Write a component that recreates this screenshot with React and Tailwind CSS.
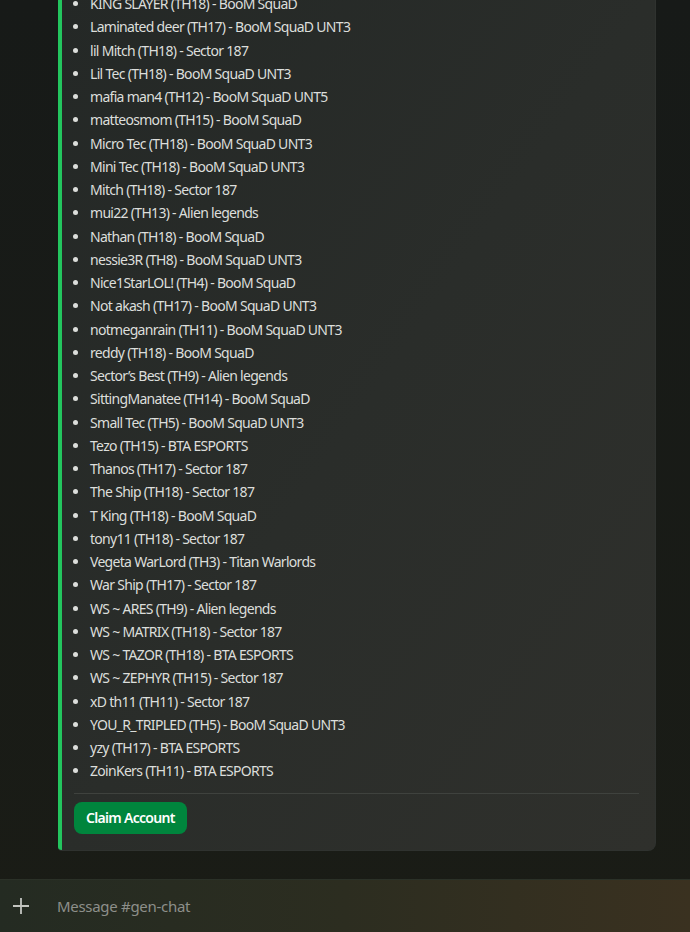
import React from 'react';

const members = [
  'KING SLAYER (TH18) - BooM SquaD',
  'Laminated deer (TH17) - BooM SquaD UNT3',
  'lil Mitch (TH18) - Sector 187',
  'Lil Tec (TH18) - BooM SquaD UNT3',
  'mafia man4 (TH12) - BooM SquaD UNT5',
  'matteosmom (TH15) - BooM SquaD',
  'Micro Tec (TH18) - BooM SquaD UNT3',
  'Mini Tec (TH18) - BooM SquaD UNT3',
  'Mitch (TH18) - Sector 187',
  'mui22 (TH13) - Alien legends',
  'Nathan (TH18) - BooM SquaD',
  'nessie3R (TH8) - BooM SquaD UNT3',
  'Nice1StarLOL! (TH4) - BooM SquaD',
  'Not akash (TH17) - BooM SquaD UNT3',
  'notmeganrain (TH11) - BooM SquaD UNT3',
  'reddy (TH18) - BooM SquaD',
  'Sector\u2019s Best (TH9) - Alien legends',
  'SittingManatee (TH14) - BooM SquaD',
  'Small Tec (TH5) - BooM SquaD UNT3',
  'Tezo (TH15) - BTA ESPORTS',
  'Thanos (TH17) - Sector 187',
  'The Ship (TH18) - Sector 187',
  'T King (TH18) - BooM SquaD',
  'tony11 (TH18) - Sector 187',
  'Vegeta WarLord (TH3) - Titan Warlords',
  'War Ship (TH17) - Sector 187',
  'WS ~ ARES (TH9) - Alien legends',
  'WS ~ MATRIX (TH18) - Sector 187',
  'WS ~ TAZOR (TH18) - BTA ESPORTS',
  'WS ~ ZEPHYR (TH15) - Sector 187',
  'xD th11 (TH11) - Sector 187',
  'YOU_R_TRIPLED (TH5) - BooM SquaD UNT3',
  'yzy (TH17) - BTA ESPORTS',
  'ZoinKers (TH11) - BTA ESPORTS',
];

const App = () => {
  return (
    <div
      className="w-[690px] h-[932px] overflow-hidden flex flex-col bg-gradient-to-b from-[#171a18] to-[#1a1c16]"
      style={{ fontFamily: '"Noto Sans", "Open Sans", sans-serif' }}
    >
      {/* Chat area */}
      <div className="flex-1 overflow-hidden">
        <div className="ml-[58px] w-[598px] -mt-[7px] flex rounded-r-[8px] rounded-bl-[4px] overflow-hidden border border-l-0 border-[#2f322f] bg-gradient-to-br from-[#242826] via-[#2a2d2a] to-[#2f302c]">
          <div className="w-[4px] bg-[#23c55e] shrink-0" />
          <div className="flex-1 pl-3 pr-4 pb-4">
            <ul className="list-disc pl-4 text-[14px] leading-[1.375] tracking-[-0.7px] text-[#dcdedb] marker:text-[#dcdedb]">
              {members.map((m) => (
                <li key={m} className="mb-1">
                  {m}
                </li>
              ))}
            </ul>
            <div className="h-px bg-[#3f423e] mt-3 mb-2" />
            <button className="h-8 px-3 rounded-[8px] bg-[#00853d] text-white text-[14px] font-semibold tracking-[-0.7px]">
              Claim Account
            </button>
          </div>
        </div>
      </div>

      {/* Message input */}
      <div className="h-[53px] mt-[28px] border-t border-[#2b3128] bg-gradient-to-r from-[#242b22] via-[#2c2d20] to-[#3a3120] flex items-center">
        <div className="w-[42px] flex justify-center">
          <svg width="18" height="18" viewBox="0 0 18 18" fill="none" stroke="#c3c5c0" strokeWidth="1.8">
            <path d="M9 1v16M1 9h16" />
          </svg>
        </div>
        <span className="ml-[15px] text-[15px] tracking-[-0.3px] text-[#8d8f8a]">Message #gen-chat</span>
      </div>
    </div>
  );
};

export default App;
